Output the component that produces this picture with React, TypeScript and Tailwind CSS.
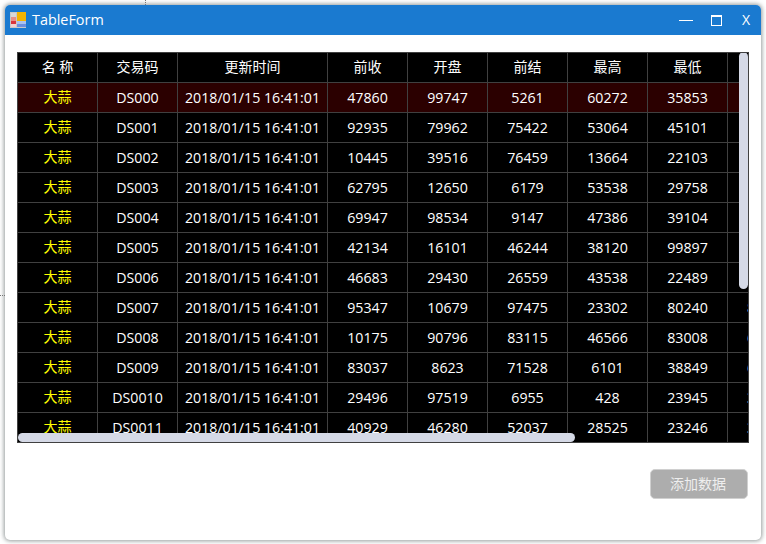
// App.tsx
const headers = ["名 称", "交易码", "更新时间", "前收", "开盘", "前结", "最高", "最低", "涨跌"]

const rows = [
  ["DS000", "47860", "99747", "5261", "60272", "35853", "8"],
  ["DS001", "92935", "79962", "75422", "53064", "45101", "6"],
  ["DS002", "10445", "39516", "76459", "13664", "22103", "5"],
  ["DS003", "62795", "12650", "6179", "53538", "29758", "3"],
  ["DS004", "69947", "98534", "9147", "47386", "39104", "4"],
  ["DS005", "42134", "16101", "46244", "38120", "99897", "3"],
  ["DS006", "46683", "29430", "26559", "43538", "22489", "6"],
  ["DS007", "95347", "10679", "97475", "23302", "80240", "8"],
  ["DS008", "10175", "90796", "83115", "46566", "83008", "6"],
  ["DS009", "83037", "8623", "71528", "6101", "38849", "6"],
  ["DS0010", "29496", "97519", "6955", "428", "23945", "3"],
  ["DS0011", "40929", "46280", "52037", "28525", "23246", "3"],
]

const cols = "grid grid-cols-[80px_80px_150px_80px_80px_80px_80px_80px_80px]"
const cell = "flex items-center justify-center border-r border-b border-[#404040] whitespace-nowrap"

function Table() {
  return (
    <div className="relative mx-3 mt-[17px] h-[391px] w-[732px] overflow-hidden border border-[#404040] bg-black text-[14.2px] text-white">
      <div className={`${cols} h-[30px] w-[810px]`}>
        {headers.map((h) => (
          <div key={h} className={`${cell} pb-[2px] text-[14px]`}>
            {h}
          </div>
        ))}
      </div>
      {rows.map((r, i) => (
        <div key={r[0]} className={`${cols} h-[30px] w-[810px] ${i === 0 ? "bg-[#2b0000]" : ""}`}>
          <div className={`${cell} pb-[2px] text-[14px] text-[#ffff00]`}>大蒜</div>
          <div className={cell}>{r[0]}</div>
          <div className={cell}>2018/01/15 16:41:01</div>
          {r.slice(1, 6).map((v, j) => (
            <div key={j} className={cell}>
              {v}
            </div>
          ))}
          <div className={`${cell} !justify-start pl-[19px]`}>{r[6]}</div>
        </div>
      ))}
      <div className="absolute -top-px right-0 h-[237px] w-[9px] rounded-[5px] bg-[#d5d9e6]" />
      <div className="absolute bottom-0 left-0 h-[9px] w-[557px] rounded-[5px] bg-[#d5d9e6]" />
    </div>
  )
}

function TitleIcon() {
  return (
    <svg width="16" height="16" viewBox="0 0 16 16" className="shrink-0">
      <rect x="0" y="0" width="16" height="16" fill="#c9c9c9" />
      <rect x="1" y="1" width="5" height="5" fill="#d8d8d8" />
      <rect x="1" y="5" width="5" height="4" fill="#e88f88" />
      <rect x="1" y="9" width="5" height="3" fill="#d8343a" />
      <rect x="1" y="12" width="5" height="3" fill="#f0d0d0" />
      <rect x="7" y="0" width="9" height="9" fill="#f4b400" />
      <rect x="7" y="9" width="9" height="3" fill="#a9c2f0" />
      <rect x="7" y="12" width="9" height="3" fill="#6a90e0" />
    </svg>
  )
}

export default function App() {
  return (
    <div className="relative h-[544px] w-[766px] overflow-hidden bg-white pt-[5px] pl-[5px] font-['Open_Sans','Noto_Sans_CJK_SC',sans-serif]">
      <div className="absolute top-0 left-[145px] h-[5px] border-l border-dotted border-[#777]" />
      <div className="absolute top-[295px] left-0 w-[5px] border-t border-dotted border-[#777]" />
      <div className="h-[535px] w-[756px] overflow-hidden rounded-[5px] bg-white shadow-[0_0_4px_1px_rgba(90,100,100,0.65)]">
        <div className="flex h-[30px] items-center bg-[#1a7ad0] pl-[5px] text-white">
          <TitleIcon />
          <span className="ml-[6px] text-[14.4px]">TableForm</span>
          <div className="ml-auto flex items-center">
            <div className="h-px w-[14px] bg-white" />
            <div className="ml-[18px] h-[11px] w-[11px] border border-t-2 border-white" />
            <span className="mr-[11px] ml-[20px] text-[14px] leading-none">X</span>
          </div>
        </div>
        <Table />
        <div className="mt-[26px] flex justify-end pr-[13px]">
          <button
            type="button"
            className="flex h-[30px] w-[98px] items-center justify-center rounded-[5px] border border-[#d0d0d0] bg-[#adadad] pr-[2px] pb-[2px] text-[14px] text-[#eeeeee]"
          >
            添加数据
          </button>
        </div>
      </div>
    </div>
  )
}
